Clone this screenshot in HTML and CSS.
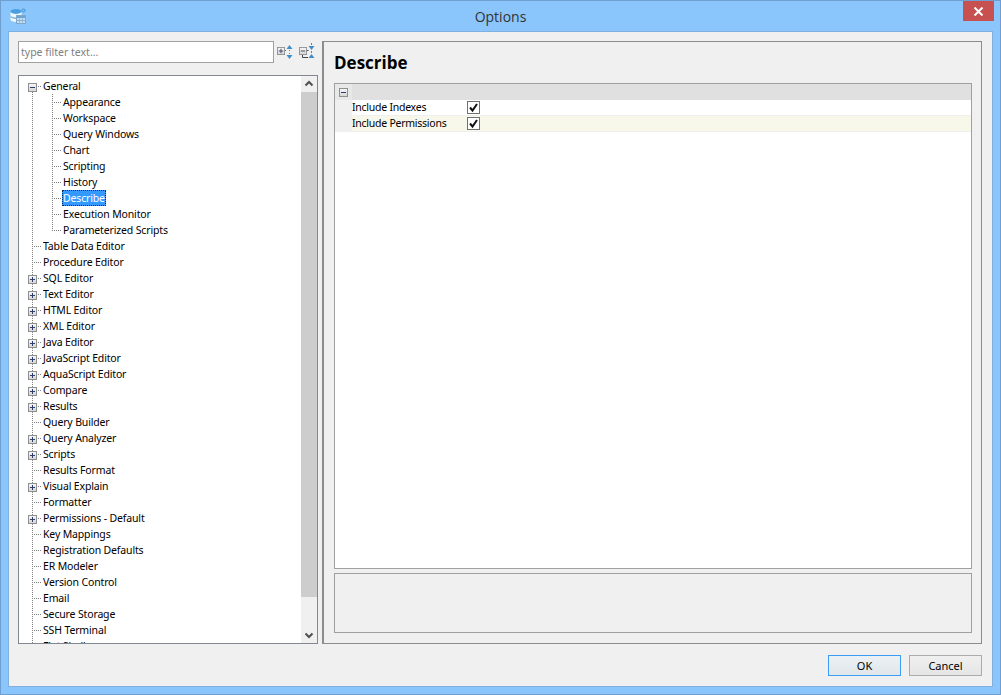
FILE: index.html
```html
<!DOCTYPE html>
<html lang="en">
<head>
<meta charset="utf-8">
<title>Options</title>
<link rel="stylesheet" href="styles.css">
</head>
<body>
<svg class="defs" width="0" height="0" aria-hidden="true">
  <defs>
    <linearGradient id="boxfill" x1="0" y1="0" x2="0" y2="1"><stop offset="0" stop-color="#f8f8f8"/><stop offset="1" stop-color="#d4d4d4"/></linearGradient>
    <symbol id="plus" viewBox="0 0 9 9"><rect x=".5" y=".5" width="8" height="8" fill="url(#boxfill)" stroke="#8f8f8f"/><path d="M2 4.500h5M4.500 2v5" stroke="#2b3f6a"/></symbol>
    <symbol id="minus" viewBox="0 0 9 9"><rect x=".5" y=".5" width="8" height="8" fill="url(#boxfill)" stroke="#8f8f8f"/><path d="M2 4.500h5" stroke="#2b3f6a"/></symbol>
  </defs>
</svg>
<div class="window">
  <header class="titlebar">
    <svg class="appicon" width="17" height="17" viewBox="0 0 17 17">
      <ellipse cx="6" cy="3.500" rx="5.500" ry="2.500" fill="#4a9fe0"/>
      <path d="M.5 3.500v8c0 1.500 2.500 2.500 5.500 2.500s5.500-1 5.500-2.500v-8c0 1.500-2.500 2.500-5.500 2.500S.5 5 .5 3.500z" fill="#f2f7fb"/>
      <path d="M.5 7c0 1.500 2.500 2.500 5.500 2.500s5.500-1 5.500-2.500v1.500c0 1.500-2.500 2.500-5.500 2.500S.5 10 .5 8.500z" fill="#7ab6e6"/>
      <rect x="6.500" y="7.500" width="9" height="8" fill="#c4dcf1" stroke="#7fa8cc"/>
      <path d="M7 9h8" stroke="#6fa3d0" stroke-width="2"/>
      <path d="M9.500 10.500v4M12.500 10.500v4M7 12.500h8" stroke="#8fb4d6"/>
      <circle cx="13.500" cy="2.500" r="1.500" fill="none" stroke="#3d8fd0"/>
    </svg>
    <h1 class="wintitle">Options</h1>
    <button class="close" aria-label="Close">
      <svg width="11" height="9" viewBox="0 0 11 9"><path d="M1.500 .5l8 8M9.500 .5l-8 8" stroke="#fff" stroke-width="2"/></svg>
    </button>
  </header>
  <main class="client">
    <div class="panes">
      <aside class="navpane">
        <div class="filter">
          <div class="filterbox">type filter text...</div>
          <svg class="tool" width="17" height="20" viewBox="0 0 17 20">
            <use href="#plus" x="0" y="5" width="8" height="8"/>
            <path d="M8 8.500h1" stroke="#666"/>
            <path d="M12.500 3l3 4h-6z" fill="#3f8fc6"/>
            <path d="M12.500 8v1M12.500 11v1" stroke="#3f8fc6"/>
            <path d="M9.500 13h6l-3 4z" fill="#3f8fc6"/>
          </svg>
          <svg class="tool" width="18" height="20" viewBox="0 0 18 20">
            <use href="#minus" x="1" y="5" width="8" height="8"/>
            <path d="M4.500 13v2.500H10M9 8.500h1.500" stroke="#444" fill="none"/>
            <path d="M10.500 4h6l-3 4z" fill="#3f8fc6"/>
            <path d="M13.500 1v2" stroke="#3f8fc6"/>
            <path d="M13.500 12l3 4h-6z" fill="#3f8fc6"/>
            <path d="M13.500 9v2" stroke="#3f8fc6"/>
          </svg>
        </div>
        <div class="treebox">
          <div class="treeview">
            <ul class="tree">
              <li><div class="row"><svg class="exp"><use href="#minus"/></svg><span class="label">General</span></div>
                <ul class="subtree">
                  <li><div class="row"><span class="label">Appearance</span></div></li>
                  <li><div class="row"><span class="label">Workspace</span></div></li>
                  <li><div class="row"><span class="label">Query Windows</span></div></li>
                  <li><div class="row"><span class="label">Chart</span></div></li>
                  <li><div class="row"><span class="label">Scripting</span></div></li>
                  <li><div class="row"><span class="label">History</span></div></li>
                  <li><div class="row"><span class="label selected">Describe</span></div></li>
                  <li><div class="row"><span class="label">Execution Monitor</span></div></li>
                  <li><div class="row"><span class="label">Parameterized Scripts</span></div></li>
                </ul>
              </li>
              <li><div class="row"><span class="label">Table Data Editor</span></div></li>
              <li><div class="row"><span class="label">Procedure Editor</span></div></li>
              <li><div class="row"><svg class="exp"><use href="#plus"/></svg><span class="label">SQL Editor</span></div></li>
              <li><div class="row"><svg class="exp"><use href="#plus"/></svg><span class="label">Text Editor</span></div></li>
              <li><div class="row"><svg class="exp"><use href="#plus"/></svg><span class="label">HTML Editor</span></div></li>
              <li><div class="row"><svg class="exp"><use href="#plus"/></svg><span class="label">XML Editor</span></div></li>
              <li><div class="row"><svg class="exp"><use href="#plus"/></svg><span class="label">Java Editor</span></div></li>
              <li><div class="row"><svg class="exp"><use href="#plus"/></svg><span class="label">JavaScript Editor</span></div></li>
              <li><div class="row"><svg class="exp"><use href="#plus"/></svg><span class="label">AquaScript Editor</span></div></li>
              <li><div class="row"><svg class="exp"><use href="#plus"/></svg><span class="label">Compare</span></div></li>
              <li><div class="row"><svg class="exp"><use href="#plus"/></svg><span class="label">Results</span></div></li>
              <li><div class="row"><span class="label">Query Builder</span></div></li>
              <li><div class="row"><svg class="exp"><use href="#plus"/></svg><span class="label">Query Analyzer</span></div></li>
              <li><div class="row"><svg class="exp"><use href="#plus"/></svg><span class="label">Scripts</span></div></li>
              <li><div class="row"><span class="label">Results Format</span></div></li>
              <li><div class="row"><svg class="exp"><use href="#plus"/></svg><span class="label">Visual Explain</span></div></li>
              <li><div class="row"><span class="label">Formatter</span></div></li>
              <li><div class="row"><svg class="exp"><use href="#plus"/></svg><span class="label">Permissions - Default</span></div></li>
              <li><div class="row"><span class="label">Key Mappings</span></div></li>
              <li><div class="row"><span class="label">Registration Defaults</span></div></li>
              <li><div class="row"><span class="label">ER Modeler</span></div></li>
              <li><div class="row"><span class="label">Version Control</span></div></li>
              <li><div class="row"><span class="label">Email</span></div></li>
              <li><div class="row"><span class="label">Secure Storage</span></div></li>
              <li><div class="row"><span class="label">SSH Terminal</span></div></li>
              <li><div class="row"><span class="label">Flat Shell</span></div></li>
            </ul>
          </div>
          <div class="scrollbar">
            <svg class="sbtn" width="16" height="16" viewBox="0 0 16 16"><path d="M4.500 9.500L8 6l3.500 3.500" fill="none" stroke="#505050" stroke-width="2"/></svg>
            <div class="thumb"></div>
            <svg class="sbtn sbtn-end" width="16" height="16" viewBox="0 0 16 16"><path d="M4.500 6.500L8 10l3.500-3.500" fill="none" stroke="#505050" stroke-width="2"/></svg>
          </div>
        </div>
      </aside>
      <section class="page">
        <h2 class="pagetitle">Describe</h2>
        <div class="grid">
          <div class="gridhead"><span class="gutter"><svg class="gridexp"><use href="#minus"/></svg></span><span class="headfill"></span></div>
          <div class="gridrow"><span class="gutter"></span><span class="prop">Include Indexes</span><span class="check"><svg width="13" height="13" viewBox="0 0 13 13"><rect x=".5" y=".5" width="12" height="12" fill="#fff" stroke="#707070"/><path d="M3 6.500l2.500 3L10 3" fill="none" stroke="#111" stroke-width="2"/></svg></span></div>
          <div class="gridrow alt"><span class="gutter"></span><span class="prop">Include Permissions</span><span class="check"><svg width="13" height="13" viewBox="0 0 13 13"><rect x=".5" y=".5" width="12" height="12" fill="#fff" stroke="#707070"/><path d="M3 6.500l2.500 3L10 3" fill="none" stroke="#111" stroke-width="2"/></svg></span></div>
        </div>
        <div class="desc"></div>
      </section>
    </div>
    <footer class="actions">
      <button class="btn default">OK</button>
      <button class="btn">Cancel</button>
    </footer>
  </main>
</div>
</body>
</html>
```
FILE: styles.css
```css
* { box-sizing: border-box; }
html, body { margin: 0; padding: 0; }
body { width: 1001px; height: 695px; overflow: hidden; font-family: "Noto Sans", "Liberation Sans", sans-serif; font-size: 10.500px; color: #000; }
.defs { position: absolute; }
.window { width: 1001px; height: 695px; display: flex; flex-direction: column; background: #8ac5fb; border: 1px solid #6f9fd0; padding: 0 7px 7px; }
.titlebar { height: 30px; display: flex; align-items: flex-start; position: relative; flex: none; }
.appicon { position: absolute; left: 2px; top: 7px; }
.wintitle { flex: 1; margin: 6px 0 0; text-align: center; font-family: "Open Sans", sans-serif; font-weight: 400; font-size: 14px; line-height: 20px; color: #333; }
.close { position: absolute; right: -1px; top: 0; width: 31px; height: 20px; padding: 0; border: 0; background: #c75050; display: flex; align-items: center; justify-content: center; }
.client { flex: 1; display: flex; flex-direction: column; background: #f0f0f0; border: 1px solid #7fb0e0; padding: 9px 10px 10px 9px; min-height: 0; }
.panes { height: 603px; display: flex; gap: 4px; flex: none; }
.navpane { width: 300px; display: flex; flex-direction: column; gap: 12px; }
.filter { display: flex; align-items: center; height: 22px; gap: 3px; }
.filterbox { width: 256px; height: 22px; background: #fff; border: 1px solid #a0a0a0; color: #808080; padding: 0 2px; line-height: 20px; font-size: 10.500px; }
.tool { flex: none; }
.tool + .tool { margin-left: 1px; }
.treebox { height: 569px; display: flex; background: #fff; border: 1px solid #828790; letter-spacing: -.15px; }
.treeview { flex: 1; overflow: hidden; padding-top: 2px; }
.tree { list-style: none; margin: 0; padding: 0 0 0 13px; background: repeating-linear-gradient(#808080 0 1px, transparent 1px 2px) 13px 14px / 1px 100% no-repeat; }
.subtree { list-style: none; margin: 0 0 0 20px; padding: 0; background: repeating-linear-gradient(#808080 0 1px, transparent 1px 2px) 0 0 / 1px 136px no-repeat; }
.row { height: 16px; display: flex; align-items: center; position: relative; line-height: 16px; white-space: nowrap; }
.row::before { content: ""; width: 10px; height: 1px; flex: none; background: repeating-linear-gradient(90deg, #808080 0 1px, transparent 1px 2px); }
.exp { position: absolute; left: -4px; top: 5px; width: 9px; height: 9px; }
.label { padding: 0 1px; height: 16px; }
.selected { background: #3399ff; color: #fff; outline: 1px dotted #0a2a5a; outline-offset: -1px; }
.scrollbar { width: 16px; flex: none; background: #f0f0f0; display: flex; flex-direction: column; }
.sbtn { flex: none; }
.sbtn-end { margin-top: auto; }
.thumb { height: 505px; flex: none; background: #cdcdcd; }
.page { flex: 1; border: 2px solid #8c8c8c; border-width: 1px 1px 1px 2px; padding: 0 9px 10px 10px; display: flex; flex-direction: column; }
.pagetitle { margin: 11px 0 0; height: 30px; font-family: "Open Sans", sans-serif; font-size: 17px; line-height: 20px; font-weight: 700; }
.grid { flex: 1; background: #fff; border: 1px solid #a0a0a0; min-height: 0; }
.gridhead { height: 16px; display: flex; background: #e0e0e0; }
.gutter { width: 17px; flex: none; background: #f0f0f0; display: flex; align-items: center; justify-content: center; }
.gridhead .gutter { background: #e8e8e8; }
.gridexp { width: 9px; height: 9px; }
.headfill { flex: 1; }
.gridrow { height: 16px; display: flex; align-items: center; border-bottom: 1px solid #f0f0f0; line-height: 15px; letter-spacing: -.25px; }
.gridrow .gutter { height: 16px; }
.alt { background: #f7f7ea; }
.prop { width: 115px; height: 16px; flex: none; white-space: nowrap; }
.check { display: flex; }
.desc { height: 60px; margin-top: 4px; border: 1px solid #a0a0a0; flex: none; }
.actions { flex: 1; display: flex; justify-content: flex-end; align-items: flex-end; gap: 8px; }
.btn { width: 73px; height: 21px; padding: 0; font: inherit; font-size: 11px; color: #000; border: 1px solid #acacac; background: linear-gradient(#f0f0f0, #e5e5e5); }
.default { border-color: #3c9cf5; background: linear-gradient(#ecf1f5, #e1e6ea); }
```
